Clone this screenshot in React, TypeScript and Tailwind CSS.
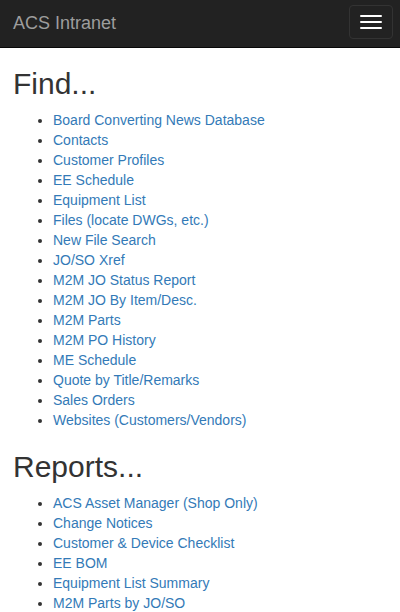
import React from "react";

const find = [
  "Board Converting News Database",
  "Contacts",
  "Customer Profiles",
  "EE Schedule",
  "Equipment List",
  "Files (locate DWGs, etc.)",
  "New File Search",
  "JO/SO Xref",
  "M2M JO Status Report",
  "M2M JO By Item/Desc.",
  "M2M Parts",
  "M2M PO History",
  "ME Schedule",
  "Quote by Title/Remarks",
  "Sales Orders",
  "Websites (Customers/Vendors)",
];

const reports = [
  "ACS Asset Manager (Shop Only)",
  "Change Notices",
  "Customer & Device Checklist",
  "EE BOM",
  "Equipment List Summary",
  "M2M Parts by JO/SO",
];

function Section({ title, items }: { title: string; items: string[] }) {
  return (
    <>
      <h2 className="text-[30px] leading-[33px] mt-5 mb-[10px] text-[#333] font-normal">{title}</h2>
      <ul className="list-disc pl-10 mb-[10px]">
        {items.map((t) => (
          <li key={t} className="text-[14px] leading-5">
            <a href="#" className="text-[#337ab7]">
              {t}
            </a>
          </li>
        ))}
      </ul>
    </>
  );
}

export default function App() {
  return (
    <div className="h-[612px] overflow-hidden bg-white text-[#333]" style={{ fontFamily: '"Liberation Sans", Arial, sans-serif' }}>
      <nav className="h-12 bg-[#222] border-b border-[#080808] flex items-start justify-between">
        <span className="text-[18px] leading-5 text-[#9d9d9d] pl-[13px] pt-[13px]">ACS Intranet</span>
        <button className="mt-[5px] mr-[7px] w-[44px] h-[34px] border border-[#333] rounded flex flex-col items-center justify-center gap-1">
          <span className="block w-[22px] h-[2px] bg-white rounded-[1px]" />
          <span className="block w-[22px] h-[2px] bg-white rounded-[1px]" />
          <span className="block w-[22px] h-[2px] bg-white rounded-[1px]" />
        </button>
      </nav>
      <div className="pl-[13px] pr-3 pt-[0.1px]">
        <div className="-mt-[1px]">
          <Section title="Find..." items={find} />
          <Section title="Reports..." items={reports} />
        </div>
      </div>
    </div>
  );
}
